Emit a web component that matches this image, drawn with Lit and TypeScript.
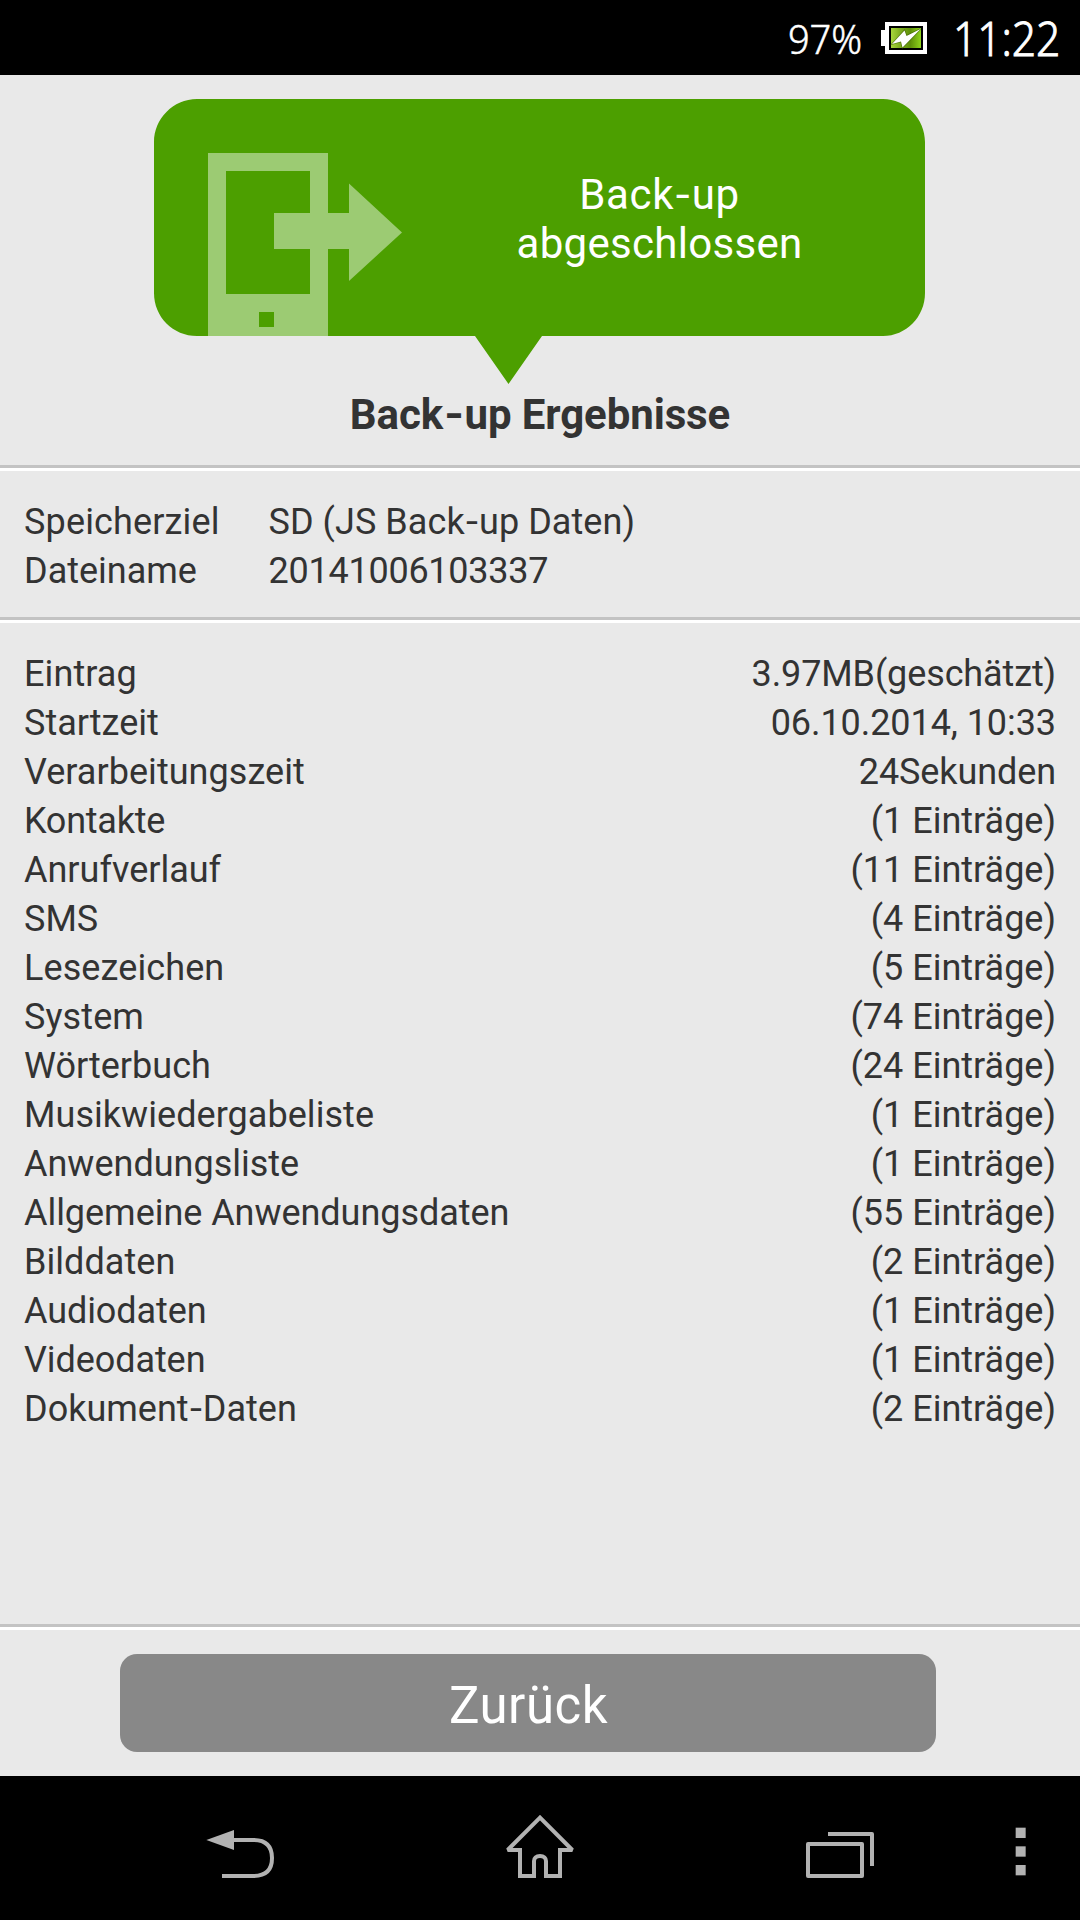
import { LitElement, html, css, svg } from "lit";
import { customElement } from "lit/decorators.js";

// label, value, label tracking (px), value tracking (px)
type Entry = [string, string, number?, number?];

const TARGET: Entry[] = [
  ["Speicherziel", "SD (JS Back-up Daten)", 0.15, 0.06],
  ["Dateiname", "20141006103337", 0, -0.25],
];

const RESULTS: Entry[] = [
  ["Eintrag", "3.97MB(geschätzt)", 0.1, -0.12],
  ["Startzeit", "06.10.2014, 10:33", 0, -0.07],
  ["Verarbeitungszeit", "24Sekunden", 0.04, -0.1],
  ["Kontakte", "(1 Einträge)", -0.25],
  ["Anrufverlauf", "(11 Einträge)"],
  ["SMS", "(4 Einträge)"],
  ["Lesezeichen", "(5 Einträge)", 0.1],
  ["System", "(74 Einträge)", 0.1],
  ["Wörterbuch", "(24 Einträge)"],
  ["Musikwiedergabeliste", "(1 Einträge)", 0.05],
  ["Anwendungsliste", "(1 Einträge)"],
  ["Allgemeine Anwendungsdaten", "(55 Einträge)", -0.04],
  ["Bilddaten", "(2 Einträge)", 0.05],
  ["Audiodaten", "(1 Einträge)", -0.08],
  ["Videodaten", "(1 Einträge)", -0.08],
  ["Dokument-Daten", "(2 Einträge)"],
];

const hyphenStyles = css`
  .hyphen {
    display: inline-block;
    margin: 0 0.06em;
    transform: scaleX(1.2);
  }
`;

// Hyphens are drawn a little wider than the font's own.
const withHyphens = (text: string) =>
  text
    .split("-")
    .map((part, i) => (i ? html`<span class="hyphen">-</span>${part}` : html`${part}`));

const cell = (text: string, tracking = 0) =>
  html`<span style="letter-spacing:${tracking}px">${withHyphens(text)}</span>`;

@customElement("status-bar")
export class StatusBar extends LitElement {
  static styles = css`
    :host {
      display: flex;
      justify-content: flex-end;
      height: 75px;
      padding-right: 20px;
      box-sizing: border-box;
      background: #000;
      color: #fff;
      font-family: "Noto Sans", sans-serif;
      font-weight: 300;
      white-space: nowrap;
    }
    .percent {
      font-size: 40px;
      line-height: 78px;
      margin-right: 18px;
      -webkit-text-stroke: 0.5px #fff;
      transform: scaleX(0.95);
      transform-origin: right;
    }
    .battery {
      width: 46px;
      height: 32px;
      margin: 22px 12px 0 0;
    }
    .clock {
      font-size: 48px;
      line-height: 76px;
      -webkit-text-stroke: 0.9px #fff;
      transform: scaleX(0.885);
      transform-origin: right;
    }
  `;
  render() {
    return html`
      <span class="percent">97%</span>
      <svg class="battery" viewBox="0 0 46 32">
        <defs>
          <linearGradient id="charge" x1="0" x2="1" y1="0" y2="0">
            <stop offset="0" stop-color="#a8d63c" />
            <stop offset=".3" stop-color="#7fae20" />
            <stop offset=".65" stop-color="#5f9108" />
            <stop offset="1" stop-color="#8fd41c" />
          </linearGradient>
        </defs>
        <path d="M0 8h4V0h42v32H4V24H0z" fill="#fff" />
        <rect x="8" y="4" width="34" height="24" fill="#000" />
        <rect x="10" y="6" width="30" height="20" fill="url(#charge)" />
        <path d="M11 22L23.5 8.5L25.5 14L39.5 7L21.5 25.5L20 19.5z" fill="#fff" stroke="#35520a" stroke-opacity=".5" stroke-width="1.6" paint-order="stroke" />
      </svg>
      <span class="clock">11:22</span>
    `;
  }
}

@customElement("result-banner")
export class ResultBanner extends LitElement {
  static styles = [
    hyphenStyles,
    css`
    :host {
      display: grid;
      width: 771px;
      height: 285px;
      margin: 24px 0 0 154px;
    }
    .shape,
    .message {
      grid-area: 1 / 1;
    }
    .shape {
      width: 771px;
      height: 285px;
    }
    .message {
      margin: 71px 101px 0 341px;
      text-align: center;
      color: #fff;
      font-size: 42px;
      line-height: 49px;
      letter-spacing: 0.3px;
      white-space: nowrap;
    }
    .first {
      letter-spacing: 0.7px;
    }
  `];
  render() {
    return html`
      <svg class="shape" viewBox="154 99 771 285">
        <path fill="#4c9f00" d="M197 99H883C906 99 925 119 925 142V293C925 317 906 336 883 336H542L508.500 384L475 336H197C173 336 154 317 154 293V142C154 119 173 99 197 99z" />
        <path fill="#9ccb73" fill-rule="evenodd" d="M208 153H328V213H349V183.500L402 232.500L349 281V249H328V336H208zM226 171V294H310V249H274V213H310V171zM259 312V327H274V312z" />
      </svg>
      <div class="message"><span class="first">${withHyphens("Back-up")}</span><br />abgeschlossen</div>
    `;
  }
}

@customElement("nav-bar")
export class NavBar extends LitElement {
  static styles = css`
    :host {
      display: flex;
      height: 144px;
      padding-left: 206px;
      box-sizing: border-box;
      background: #000;
    }
    .icon {
      flex: none;
      width: 68px;
      height: 144px;
      margin-right: 232px;
      fill: none;
      stroke: #b2b2b2;
      stroke-width: 12;
    }
    .recent {
      margin-right: 141px;
    }
    .menu {
      width: 11px;
      margin-right: 0;
    }
    .solid {
      fill: #b2b2b2;
      stroke: none;
    }
  `;
  render() {
    return html`
      <svg class="icon" viewBox="48 -42 204 432">
        <path class="solid" d="M49 150L132 120V180z" />
        <path d="M130 150H190C227 150 246 168 246 204C246 240 227 258 190 258H96" />
      </svg>
      <svg class="icon" viewBox="948 -42 204 432">
        <path stroke-linejoin="miter" stroke-miterlimit="2" d="M1050 83L953 180H990V258H1032V213C1032 205 1038 198 1050 198C1062 198 1068 205 1068 213V258H1110V180H1147z" />
      </svg>
      <svg class="icon recent" viewBox="78 -42 204 432">
        <rect x="84" y="162" width="162" height="96" stroke-linejoin="round" />
        <path stroke-linejoin="round" d="M144 132H276V228" />
      </svg>
      <svg class="icon menu" viewBox="706 -42 33 432">
        ${[113, 169, 225].map((y) => svg`<rect class="solid" x="708" y=${y} width="30" height="31" />`)}
      </svg>
    `;
  }
}

@customElement("app-root")
export class AppRoot extends LitElement {
  static styles = [
    hyphenStyles,
    css`
    :host {
      display: flex;
      flex-direction: column;
      width: 1080px;
      height: 1920px;
      overflow: hidden;
      background: #e9e9e9;
      color: #333;
      font-family: Roboto, sans-serif;
      font-size: 36px;
      line-height: 49px;
      white-space: nowrap;
    }
    .title {
      height: 81px;
      margin: 0;
      text-align: center;
      font-size: 42px;
      line-height: 62px;
      font-weight: 700;
      letter-spacing: -0.1px;
    }
    .rule {
      flex: none;
      height: 3px;
      background: #c3c3c3;
      border-bottom: 3px solid #fff;
    }
    .target {
      display: grid;
      grid-template-columns: 244.5px 1fr;
      align-content: start;
      height: 146px;
      padding: 27px 24px 0;
      box-sizing: border-box;
    }
    .results {
      flex: 1;
      padding: 27px 24px 0;
    }
    .row {
      display: flex;
      justify-content: space-between;
    }
    .footer {
      height: 146px;
      padding: 24px 144px 0 120px;
      box-sizing: border-box;
    }
    .back {
      display: block;
      width: 100%;
      height: 98px;
      padding: 3px 0 0 1px;
      border: 0;
      border-radius: 17px;
      background: #888;
      color: #fff;
      font: 51px/98px Roboto, sans-serif;
      letter-spacing: 0.5px;
    }
  `];
  render() {
    return html`
      <status-bar></status-bar>
      <result-banner></result-banner>
      <h1 class="title">${withHyphens("Back-up Ergebnisse")}</h1>
      <div class="rule"></div>
      <div class="target">
        ${TARGET.map(([k, v, a, b]) => html`${cell(k, a)}${cell(v, b)}`)}
      </div>
      <div class="rule"></div>
      <div class="results">
        ${RESULTS.map(([k, v, a, b]) => html`<div class="row">${cell(k, a)}${cell(v, b)}</div>`)}
      </div>
      <div class="rule"></div>
      <div class="footer"><button class="back">Zurück</button></div>
      <nav-bar></nav-bar>
    `;
  }
}
